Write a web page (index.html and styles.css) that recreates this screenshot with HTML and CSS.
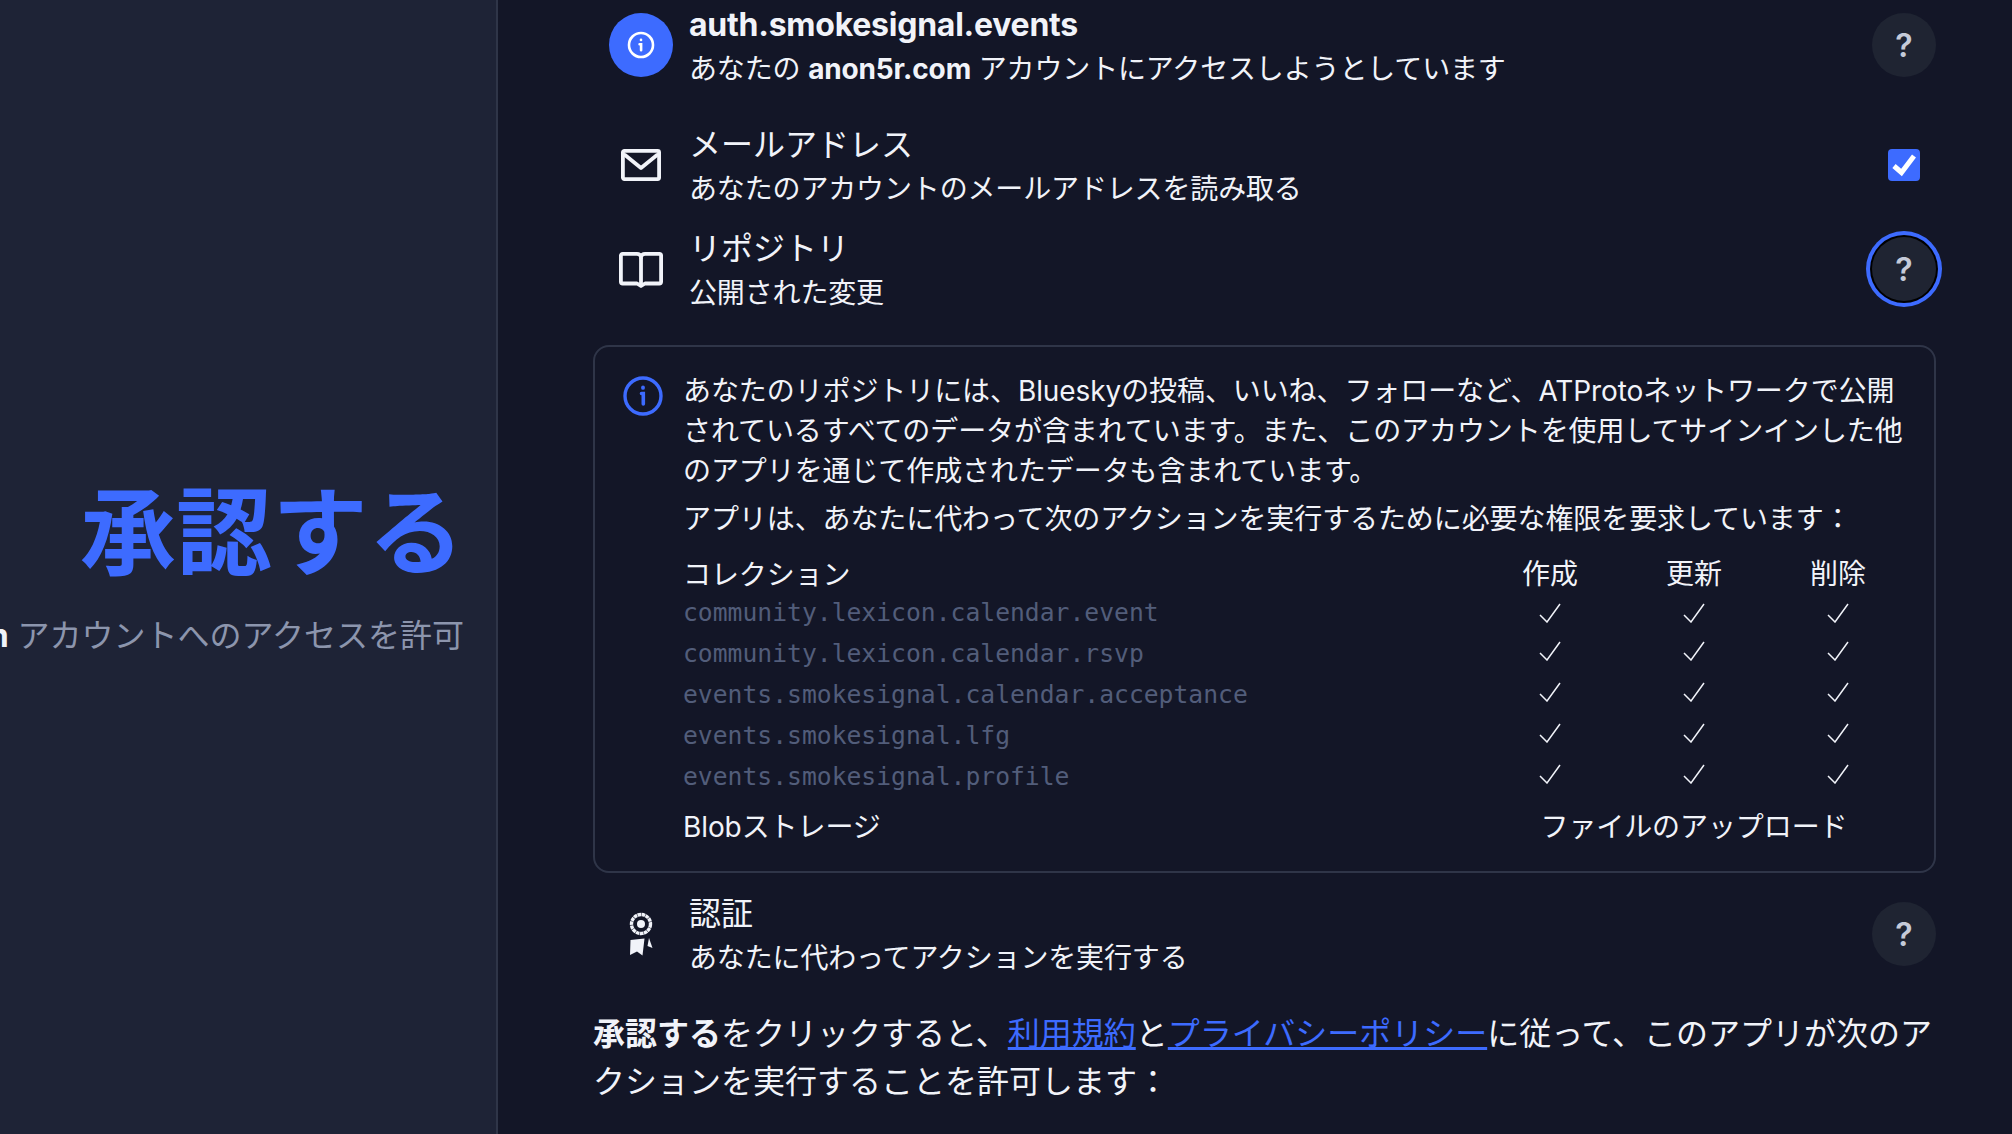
FILE: index.html
```html
<!DOCTYPE html>
<html lang="ja">
<head>
    <meta charset="UTF-8">
    <title>承認する</title>
    <link rel="stylesheet" href="styles.css">
</head>
<body>

<svg class="defs" width="0" height="0">
    <symbol id="tick" viewBox="0 0 22 20">
        <path d="M1 12l7 7L21 1" fill="none" stroke="currentColor" stroke-width="1.5"/>
    </symbol>
</svg>

<div class="page">
    <aside class="side">
        <h1>承認する</h1>
        <p class="side-sub"><strong>anon5r.com</strong> アカウントへのアクセスを許可</p>
    </aside>

    <main class="main">
        <div class="row row-head">
            <div class="row-icon">
                <span class="app-badge">
                    <svg width="28" height="28" viewBox="0 0 28 28" fill="none" stroke="#fff" stroke-width="2.6" stroke-linecap="round">
                        <circle cx="14" cy="14" r="12"/>
                        <path d="M12.6 13.2h1.5v6"/>
                        <path d="M14 8.9v.1"/>
                    </svg>
                </span>
            </div>
            <div class="row-text">
                <div class="row-title app-name">auth.smokesignal.events</div>
                <div class="row-desc">あなたの <strong>anon5r.com</strong> アカウントにアクセスしようとしています</div>
            </div>
            <button class="help">?</button>
        </div>

        <div class="row">
            <div class="row-icon">
                <svg width="40" height="32" viewBox="0 0 40 32" fill="none" stroke="#f1f3f9" stroke-width="3.8" stroke-linejoin="round" stroke-linecap="round">
                    <rect x="1.9" y="1.9" width="36.2" height="28.2" rx="1.5"/>
                    <path d="M4 6l16 13L36 6"/>
                </svg>
            </div>
            <div class="row-text">
                <div class="row-title">メールアドレス</div>
                <div class="row-desc">あなたのアカウントのメールアドレスを読み取る</div>
            </div>
            <div class="check-slot">
                <span class="checkbox">
                    <svg width="32" height="32" viewBox="0 0 32 32" fill="none" stroke="#fff" stroke-width="5">
                        <path d="M6 17l7.5 6.5L26 7"/>
                    </svg>
                </span>
            </div>
        </div>

        <div class="row">
            <div class="row-icon">
                <svg class="book-icon" width="44" height="36" viewBox="0 0 44 36" fill="none" stroke="#f1f3f9" stroke-width="3.8" stroke-linejoin="round">
                    <path d="M22 5.5C22 3 20 1.9 18 1.9H3.7A1.8 1.8 0 0 0 1.900 3.700v26a1.800 1.800 0 0 0 1.800 1.800H18l4 2.500 4-2.500h14.300a1.800 1.800 0 0 0 1.800-1.800v-26a1.800 1.800 0 0 0-1.800-1.800H26c-2 0-4 1.100-4 3.600z"/>
                    <path d="M22 5.500V33"/>
                </svg>
            </div>
            <div class="row-text">
                <div class="row-title">リポジトリ</div>
                <div class="row-desc">公開された変更</div>
            </div>
            <button class="help help-focus">?</button>
        </div>

        <section class="detail">
            <svg class="detail-icon" width="40" height="40" viewBox="0 0 40 40" fill="none" stroke="#3d6bff" stroke-linecap="round">
                <circle cx="20" cy="20" r="18" stroke-width="3.400"/>
                <path d="M18.500 17.500h1.800v10.500" stroke-width="3.600"/>
                <path d="M20 11.500v.4" stroke-width="3.800"/>
            </svg>
            <div class="detail-body">
                <p>あなたのリポジトリには、Blueskyの投稿、いいね、フォローなど、ATProtoネットワークで公開されているすべてのデータが含まれています。また、このアカウントを使用してサインインした他のアプリを通じて作成されたデータも含まれています。</p>
                <p class="detail-lead">アプリは、あなたに代わって次のアクションを実行するために必要な権限を要求しています：</p>

                <div class="perm-grid">
                    <div class="perm-head">コレクション</div>
                    <div class="perm-head perm-col">作成</div>
                    <div class="perm-head perm-col">更新</div>
                    <div class="perm-head perm-col">削除</div>

                    <div class="perm-name">community.lexicon.calendar.event</div>
                    <div class="perm-col"><svg class="tick tick-first"><use href="#tick"/></svg></div>
                    <div class="perm-col"><svg class="tick tick-first"><use href="#tick"/></svg></div>
                    <div class="perm-col"><svg class="tick tick-first"><use href="#tick"/></svg></div>

                    <div class="perm-name">community.lexicon.calendar.rsvp</div>
                    <div class="perm-col"><svg class="tick"><use href="#tick"/></svg></div>
                    <div class="perm-col"><svg class="tick"><use href="#tick"/></svg></div>
                    <div class="perm-col"><svg class="tick"><use href="#tick"/></svg></div>

                    <div class="perm-name">events.smokesignal.calendar.acceptance</div>
                    <div class="perm-col"><svg class="tick"><use href="#tick"/></svg></div>
                    <div class="perm-col"><svg class="tick"><use href="#tick"/></svg></div>
                    <div class="perm-col"><svg class="tick"><use href="#tick"/></svg></div>

                    <div class="perm-name">events.smokesignal.lfg</div>
                    <div class="perm-col"><svg class="tick"><use href="#tick"/></svg></div>
                    <div class="perm-col"><svg class="tick"><use href="#tick"/></svg></div>
                    <div class="perm-col"><svg class="tick"><use href="#tick"/></svg></div>

                    <div class="perm-name">events.smokesignal.profile</div>
                    <div class="perm-col"><svg class="tick"><use href="#tick"/></svg></div>
                    <div class="perm-col"><svg class="tick"><use href="#tick"/></svg></div>
                    <div class="perm-col"><svg class="tick"><use href="#tick"/></svg></div>

                    <div class="blob-name">Blobストレージ</div>
                    <div class="blob-value">ファイルのアップロード</div>
                </div>
            </div>
        </section>

        <div class="row row-last">
            <div class="row-icon">
                <svg width="24" height="44" viewBox="0 0 24 44" fill="none">
                    <circle cx="12" cy="12" r="9.500" stroke="#f1f3f9" stroke-width="3.400" stroke-dasharray="3.600 0.500"/>
                    <circle cx="12" cy="12" r="4" fill="#f1f3f9"/>
                    <path d="M1.500 28l14-1.500-2 17-5.500-4-7 3.500z" fill="#f1f3f9"/>
                    <path d="M20 26l3.500 10-5-2z" fill="#f1f3f9"/>
                </svg>
            </div>
            <div class="row-text">
                <div class="row-title">認証</div>
                <div class="row-desc">あなたに代わってアクションを実行する</div>
            </div>
            <button class="help">?</button>
        </div>

        <p class="notice"><strong>承認する</strong>をクリックすると、<a href="#">利用規約</a>と<a href="#">プライバシーポリシー</a>に従って、このアプリが次のアクションを実行することを許可します：</p>
    </main>
</div>

</body>
</html>
```

FILE: styles.css
```css
html, body {
    margin: 0;
    height: 1134px;
    overflow: hidden;
}
body {
    font-family: Inter, "Noto Sans CJK JP", sans-serif;
    background-color: #131627;
    color: #f1f3f9;
}
.defs {
    display: block;
    height: 0;
}
.page {
    display: grid;
    grid-template-columns: 498px 1fr;
    height: 1134px;
}
.side {
    display: flex;
    flex-direction: column;
    justify-content: center;
    align-items: flex-end;
    padding: 6px 32px 0 0;
    background-color: #1e2336;
    border-right: 2px solid #2f3548;
    overflow: hidden;
}
.side h1 {
    margin: 0;
    font-size: 96px;
    line-height: 96px;
    font-weight: 700;
    color: #3d6bff;
    white-space: nowrap;
}
.side-sub {
    margin: 36px 0 0;
    font-size: 32px;
    line-height: 40px;
    color: #8c95ad;
    white-space: nowrap;
}
.side-sub strong {
    color: #f1f3f9;
}
.main {
    padding: 3px 76px 0 95px;
}
.row {
    display: flex;
    align-items: center;
    height: 104px;
    padding-left: 16px;
}
.row-head {
    height: 84px;
    margin-bottom: 26px;
}
.row-last {
    margin-top: 9px;
}
.row-icon {
    display: flex;
    align-items: center;
    justify-content: center;
    flex: none;
    width: 64px;
    margin-right: 16px;
}
.book-icon {
    margin-top: 2px;
}
.row-text {
    flex: 1;
    min-width: 0;
    padding-top: 2px;
}
.row-title {
    font-size: 32px;
    line-height: 44px;
}
.app-name {
    font-weight: 700;
    letter-spacing: -0.25px;
}
.row-desc {
    margin-top: 2px;
    font-size: 28px;
    line-height: 40px;
    letter-spacing: -0.15px;
}
.app-badge {
    display: flex;
    align-items: center;
    justify-content: center;
    width: 64px;
    height: 64px;
    border-radius: 50%;
    background-color: #3d6bff;
}
.help {
    flex: none;
    width: 64px;
    height: 64px;
    padding: 0;
    border: none;
    border-radius: 50%;
    background-color: #1f2432;
    color: #c5cad8;
    font-family: Inter, sans-serif;
    font-size: 32px;
    font-weight: 600;
}
.help-focus {
    box-shadow: 0 0 0 2px #000, 0 0 0 6px #3d6bff;
}
.check-slot {
    display: flex;
    justify-content: center;
    flex: none;
    width: 64px;
}
.checkbox {
    display: block;
    width: 32px;
    height: 32px;
    border-radius: 4px;
    background-color: #3d6bff;
}
.checkbox svg {
    display: block;
}
.detail {
    display: flex;
    align-items: flex-start;
    gap: 20px;
    margin-top: 24px;
    padding: 24px 24px 24px 28px;
    border: 2px solid #2f3548;
    border-radius: 16px;
}
.detail-icon {
    flex: none;
    margin-top: 5px;
}
.detail-body {
    flex: 1;
    min-width: 0;
    font-size: 28px;
    line-height: 40px;
    letter-spacing: -0.09px;
}
.detail-body p {
    margin: 0;
}
.detail-body .detail-lead {
    margin-top: 8px;
}
.perm-grid {
    display: grid;
    grid-template-columns: 1fr 144px 144px 144px;
    grid-template-rows: 37px repeat(5, 41px) 50px;
    margin-top: 16px;
}
.perm-col {
    display: flex;
    align-items: center;
    justify-content: center;
}
.perm-head {
    line-height: 40px;
}
.perm-name {
    font-family: "DejaVu Sans Mono", monospace;
    font-size: 24.700px;
    line-height: 41px;
    letter-spacing: 0;
    color: #525d7a;
    white-space: nowrap;
}
.tick {
    width: 22px;
    height: 20px;
    margin-top: -6px;
}
.tick-first {
    margin-top: 1px;
}
.blob-name,
.blob-value {
    margin-top: 10px;
    line-height: 40px;
}
.blob-value {
    grid-column: 2 / span 3;
    text-align: center;
}
.notice {
    margin: 24px 0 0;
    font-size: 32px;
    line-height: 48px;
}
.notice a {
    color: #3d6bff;
}
```
